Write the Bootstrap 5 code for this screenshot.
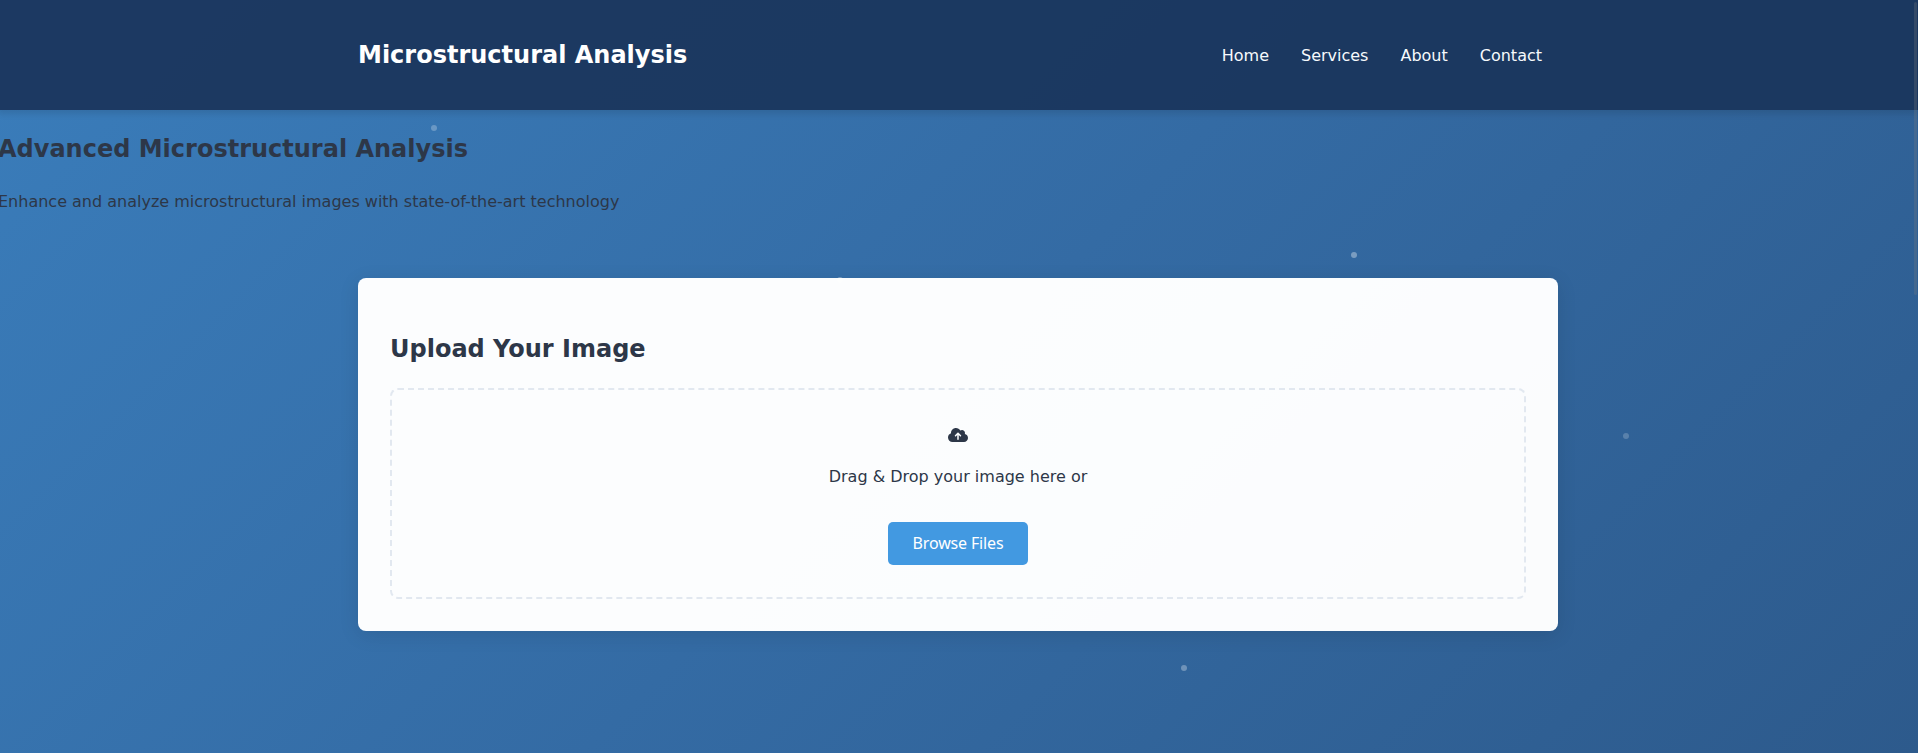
<!DOCTYPE html>
<html lang="en">
<head>
<meta charset="utf-8">
<meta name="viewport" content="width=device-width, initial-scale=1">
<title>Microstructural Analysis</title>
<link rel="stylesheet" href="https://cdn.jsdelivr.net/npm/bootstrap@5.3.0/dist/css/bootstrap.min.css">
<style>
html, body { height: 100%; overflow: hidden; }
body { font-family: "DejaVu Sans", sans-serif; font-size: 16px; line-height: 1.6; color: #2d3748; background: linear-gradient(135deg, #3a7dbb 0%, #346ba4 50%, #2d5a8c 100%); }
.page-shift { margin-left: -2px; }
.site-header { height: 110px; background: rgba(26,54,93,.95); box-shadow: 0 4px 6px rgba(0,0,0,.1); }
.wrap { width: 1200px; margin: 0 auto; }
.site-title { font-size: 24px; line-height: 38px; font-weight: 700; color: #fff; margin: 0; }
.site-header .navbar-nav { gap: 32px; padding: 2px 16px 0 0; }
.site-header .navbar-nav .nav-link { color: #f7fafc; padding: 0; }
h2 { font-size: 24px; line-height: 38px; font-weight: 700; margin: 0; }
.hero { padding-top: 20px; height: 168px; }
.hero p { margin: 21px 0 0; }
.upload-panel { --bs-card-border-width: 0; --bs-card-border-radius: 8px; --bs-card-bg: rgba(255,255,255,.985); color: #2d3748; height: 353px; padding: 52px 32px 32px; box-shadow: 0 4px 20px rgba(0,0,0,.1); }
.drop-zone { height: 211px; border: 2px dashed #e2e8f0; border-radius: 8px; }
.cloud { width: 20px; height: 16px; margin-top: 37px; }
.drop-zone p { margin: 21px 0 32px; line-height: 26px; }
.btn-browse { --bs-btn-bg: #4299e1; --bs-btn-color: #fff; --bs-btn-border-width: 0; font-family: "Noto Sans", sans-serif; font-size: 16px; letter-spacing: -.15px; line-height: 19px; width: 140px; height: 43px; padding: 0; border-radius: 5px; }
.particles { z-index: -1; }
.dot { position: absolute; width: 6px; height: 6px; border-radius: 50%; background: #fff; }
.thumb { position: absolute; z-index: 5; top: 2px; right: 1px; width: 3px; height: 293px; border-radius: 2px; background: rgba(128,128,128,.25); }
</style>
</head>
<body>
<div class="particles position-absolute top-0 start-0 w-100 h-100">
  <span class="dot" style="left:431px;top:125px;opacity:.25"></span>
  <span class="dot" style="left:1351px;top:252px;opacity:.35"></span>
  <span class="dot" style="left:1623px;top:433px;opacity:.2"></span>
  <span class="dot" style="left:1181px;top:665px;opacity:.3"></span>
  <span class="dot" style="left:837px;top:277px;opacity:.35"></span>
</div>
<div class="page-shift">
  <header class="site-header">
    <nav class="wrap navbar navbar-expand p-0 h-100 d-flex justify-content-between align-items-center">
      <h1 class="site-title">Microstructural Analysis</h1>
      <ul class="navbar-nav">
        <li class="nav-item"><a class="nav-link" href="#">Home</a></li>
        <li class="nav-item"><a class="nav-link" href="#">Services</a></li>
        <li class="nav-item"><a class="nav-link" href="#">About</a></li>
        <li class="nav-item"><a class="nav-link" href="#">Contact</a></li>
      </ul>
    </nav>
  </header>
  <section class="hero">
    <h2>Advanced Microstructural Analysis</h2>
    <p>Enhance and analyze microstructural images with state-of-the-art technology</p>
  </section>
  <main class="wrap card upload-panel">
    <h2 class="mb-3 pb-1">Upload Your Image</h2>
    <div class="drop-zone d-flex flex-column align-items-center">
      <svg class="cloud" viewBox="0 0 640 512" fill="currentColor" aria-hidden="true"><path d="M144 480C64.5 480 0 415.5 0 336c0-62.8 40.2-116.2 96.2-135.9c-.1-2.7-.2-5.400-.2-8.100c0-88.400 71.600-160 160-160c59.300 0 111 32.200 138.700 80.200C409.900 102 428.300 96 448 96c53 0 96 43 96 96c0 12.200-2.300 23.800-6.400 34.600C596 238.400 640 290.100 640 352c0 70.700-57.300 128-128 128H144zm79-217c-9.400 9.400-9.400 24.600 0 33.900s24.600 9.400 33.900 0l39-39V392c0 13.300 10.700 24 24 24s24-10.700 24-24V257.900l39 39c9.400 9.400 24.600 9.400 33.900 0s9.400-24.600 0-33.900l-80-80c-9.400-9.400-24.600-9.400-33.900 0l-80 80z"/></svg>
      <p>Drag &amp; Drop your image here or</p>
      <button class="btn btn-browse" type="button">Browse Files</button>
    </div>
  </main>
</div>
<div class="thumb"></div>
<script src="https://cdn.jsdelivr.net/npm/bootstrap@5.3.0/dist/js/bootstrap.bundle.min.js"></script>
</body>
</html>
